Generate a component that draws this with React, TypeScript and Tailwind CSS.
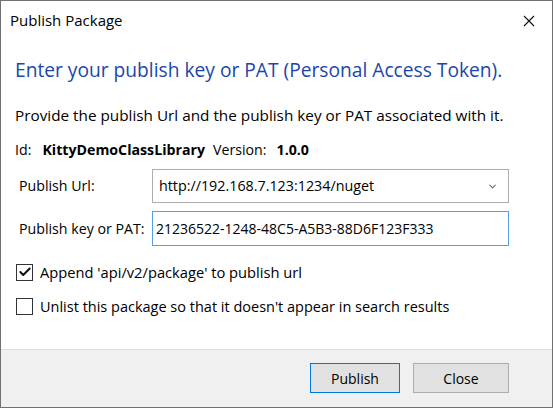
import { Check, ChevronDown } from "lucide-react";

const font = { fontFamily: '"Open Sans", "Noto Sans", sans-serif' };

function CheckRow({ checked, label, size }: { checked: boolean; label: string; size: string }) {
  return (
    <label className="flex items-center gap-[7px]">
      <span className="flex h-[17px] w-[17px] items-center justify-center border border-[#333333] bg-white">
        {checked && <Check size={14} strokeWidth={3.5} className="text-[#111]" />}
      </span>
      <span className={size}>{label}</span>
    </label>
  );
}

export default function App() {
  return (
    <div
      className="flex h-[408px] w-[553px] flex-col border border-[#707070] bg-white text-[14px] text-black"
      style={font}
    >
      <div className="flex h-[39px] shrink-0 items-center justify-between pl-[9px] pr-[17px]">
        <span className="text-[15px]">Publish Package</span>
        <svg width="12" height="12" viewBox="0 0 12 12">
          <path d="M1 1L11 11M11 1L1 11" stroke="#111" strokeWidth="1.1" />
        </svg>
      </div>

      <div className="flex flex-1 flex-col px-[14px]">
        <h1 className="mt-[16px] text-[19.2px] leading-[27px] text-[#1a47a8]">
          Enter your publish key or PAT (Personal Access Token).
        </h1>
        <p className="mt-[22px] text-[15.3px] leading-[20px]">
          Provide the publish Url and the publish key or PAT associated with it.
        </p>
        <div className="mt-[15px] flex items-center leading-[20px] text-[14.2px]">
          <span>Id:</span>
          <span className="ml-[11px] font-bold">KittyDemoClassLibrary</span>
          <span className="ml-[8px]">Version:</span>
          <span className="ml-[10px] font-bold">1.0.0</span>
        </div>

        <div className="mt-[9px] grid grid-cols-[133px_1fr] gap-y-[8px] pl-[4px] pr-[29px]">
          <div className="flex items-center text-[14.2px]">Publish Url:</div>
          <div className="flex h-[34px] items-center justify-between border border-[#adadad] bg-white pl-[6px] pr-[10px]">
            <span className="text-[14.3px]">http://192.168.7.123:1234/nuget</span>
            <ChevronDown size={11} strokeWidth={2.2} className="text-[#666]" />
          </div>
          <div className="flex items-center text-[14.2px]">Publish key or PAT:</div>
          <div className="flex h-[35px] items-center border border-[#569de5] bg-white pl-[3px]">
            <span>21236522-1248-48C5-A5B3-88D6F123F333</span>
          </div>
        </div>

        <div className="mt-[15px] flex flex-col gap-[13px] pl-[1px]">
          <CheckRow checked size="text-[14.7px]" label="Append 'api/v2/package' to publish url" />
          <CheckRow
            checked={false}
            size="text-[14.5px]"
            label="Unlist this package so that it doesn't appear in search results"
          />
        </div>
      </div>

      <div className="flex h-[58px] shrink-0 items-start justify-end gap-[13px] border-t border-[#dfdfdf] bg-[#f0f0f0] pr-[43px] pt-[13px]">
        <button className="h-[30px] w-[90px] border border-[#0078d7] bg-[#e1e1e1]">Publish</button>
        <button className="h-[30px] w-[96px] border border-[#adadad] bg-[#e1e1e1]">Close</button>
      </div>
    </div>
  );
}
